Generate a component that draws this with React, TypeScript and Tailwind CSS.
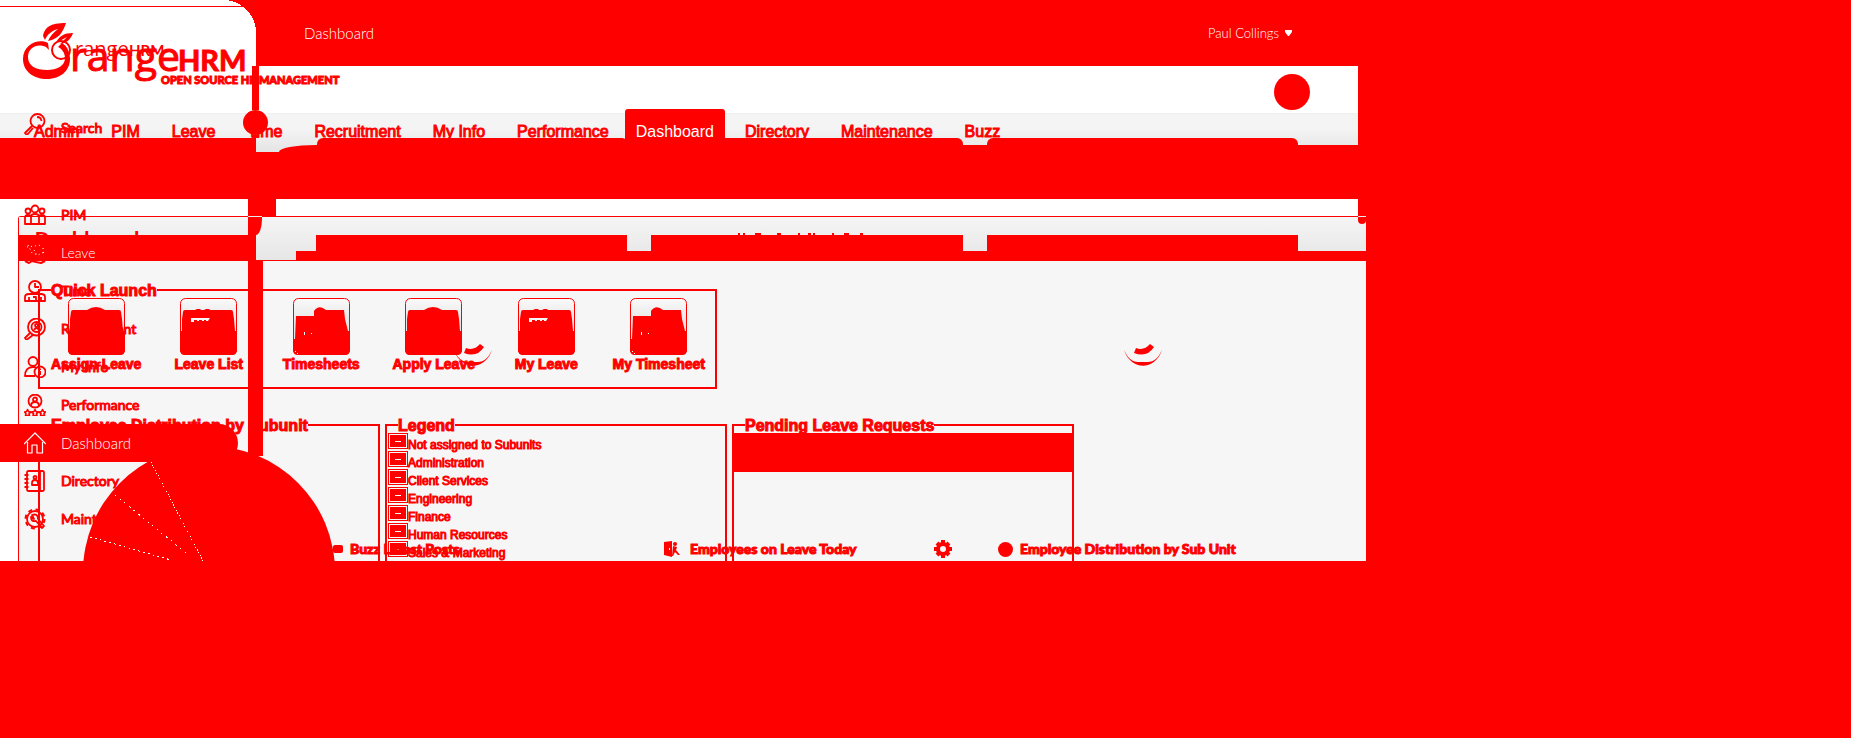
import React from "react";

const sans = "font-['Liberation_Sans',Arial,sans-serif]";

const classicMenu = ["Admin", "PIM", "Leave", "Time", "Recruitment", "My Info", "Performance", "Dashboard", "Directory", "Maintenance", "Buzz"];

const launchItems = [
  { label: "Assign Leave", kind: "person" },
  { label: "Leave List", kind: "list" },
  { label: "Timesheets", kind: "clock" },
  { label: "Apply Leave", kind: "person" },
  { label: "My Leave", kind: "list" },
  { label: "My Timesheet", kind: "clock" },
];

const legendRows = ["Not assigned to Subunits", "Administration", "Client Services", "Engineering", "Finance", "Human Resources", "Sales & Marketing"];

function Logo() {
  return (
    <svg width="360" height="70" viewBox="0 20 360 70" className="block" fill="#f00" role="img" aria-label="OrangeHRM">
      <path fillRule="evenodd" d="M48 43C40 38 23 43 23 59C23 71 33 79 47 79C61 79 70 70 70 59C70 52 67 46 62 43L58 47C62 49 65 53 65 58C65 66 57 70 47 70C36 70 28 66 28 57C28 47 38 43 46 47L49 50Z" />
      <path d="M43 36C45 27 50 23 66 23C63 32 59 39 48 41C50 36 54 32 58 29C51 31 47 35 45 40Z" />
      <path d="M56 43C59 36 64 33 73 33C71 39 67 43 60 44L67 37Z" />
      <circle cx="61" cy="50" r="9" fill="none" stroke="#f00" strokeWidth="2" />
      <g stroke="#f00" strokeWidth="1">
        <text x="70" y="71" fontFamily="Open Sans, sans-serif" fontSize="41">range</text>
        <text x="178" y="71" fontFamily="Lato, sans-serif" fontSize="29" fontWeight="700">HRM</text>
        <text x="161" y="84" fontFamily="Lato, sans-serif" fontSize="11" fontWeight="900">OPEN SOURCE HR MANAGEMENT</text>
      </g>
      <text x="75" y="56" fontFamily="Open Sans, sans-serif" fontSize="20">range</text>
      <text x="129" y="56" fontFamily="Lato, sans-serif" fontSize="15" fontWeight="700">HRM</text>
    </svg>
  );
}

function LaunchIcon({ kind }: { kind: string }) {
  return (
    <svg width="57" height="57" viewBox="0 0 57 57" className="block">
      <defs>
        <linearGradient id="tile" x1="0" y1="0" x2="0" y2="1">
          <stop offset="0" stopColor="#fafafa" />
          <stop offset="0.4" stopColor="#e6e6e6" />
        </linearGradient>
      </defs>
      <rect x="0.5" y="0.5" width="56" height="56" rx="5" fill="url(#tile)" stroke="#f00" />
      {kind === "person" && <path fill="#f00" d="M3 14q0-2 2-2H19q9-6 18 0H51q2 0 2 2l1 7l1 12h2v19q0 5-5 5H5q-5 0-5-5V33h2V21Z" />}
      {kind === "list" && <path fill="#f00" d="M3 14q0-2 2-2H15l2-1h3l1 1h3l2-1h3l1 1H51q2 0 2 2l1 7l1 12h2v19q0 5-5 5H5q-5 0-5-5V33h2V21Z" />}
      {kind === "clock" && <path fill="#f00" d="M3 18H21V13q5-7 12-1H51l1 9l3 12h2v19q0 5-5 5H5q-5 0-5-5V41h2Z" />}
      {kind === "list" && <path d="M11 20h19l-2 3H26V22H24v1H22V22H19v1H17V22H14v2H11Z" fill="#f6f6f6" />}
      {kind === "clock" && <path d="M11 34h1v3h-1zM18 35h1v1h-1zM2 53h1v1h-1zM4 55h1v1h-1z" fill="#f6f6f6" />}
    </svg>
  );
}

function Fieldset({ title, className, children }: { title: string; className: string; children?: React.ReactNode }) {
  return (
    <section className={className}>
      <h2 className="-mt-[8px] ml-[11px] h-[15px] w-fit bg-[#f6f6f6] text-[16px] leading-[15px] font-bold [-webkit-text-stroke:1px_#f00]">{title}</h2>
      {children}
    </section>
  );
}

function SubunitPie() {
  return (
    <svg width="256" height="116" viewBox="81 445 256 116" className="mt-[12px] ml-[41px] block">
      <circle cx="209" cy="572" r="126" fill="#f00" />
      <g stroke="#fff" strokeWidth="1" shapeRendering="crispEdges">
        <path d="M151 462L203 561" strokeDasharray="1 2" />
        <path d="M115 495L191 557" strokeDasharray="1 5 2 4" />
        <path d="M90 537L171 560" strokeDasharray="2 3" />
      </g>
    </svg>
  );
}

function Smile() {
  return (
    <svg width="40" height="24" viewBox="0 0 40 24" className="block" fill="#f00">
      <path d="M1 7C8 28 32 28 39 7C33 20 27 19 20 19C13 19 7 20 1 7Z" />
      <path d="M13 5Q21 8 27 1L31 4Q24 15 11 10Z" />
    </svg>
  );
}

function ClassicPage() {
  return (
    <div className={`${sans} col-start-1 row-start-1 text-[#f00]`}>
      <header className="mr-2 h-[113px] bg-white pt-[6px]">
        <div className="border-t border-[#f00] pt-[13px]">
          <Logo />
        </div>
      </header>
      <nav className="mr-2 flex h-[39px] border-t border-[#efefef] bg-linear-to-b from-[#f4f4f4] from-40% to-[#e4e4e4] pl-[18px] text-[16px] leading-[20px]">
        {classicMenu.map((m) =>
          m === "Dashboard" ? (
            <a key={m} href="#dashboard" className="-mt-[5px] rounded-t-[3px] bg-[#f00] px-[11px] pt-[13px] text-white">{m}</a>
          ) : (
            <a key={m} href="#menu" className="px-4 pt-[8px] whitespace-nowrap [-webkit-text-stroke:1px_#f00] [&:nth-child(9)]:pl-[20px]">{m}</a>
          )
        )}
      </nav>
      <div className="h-[47px] bg-[#f00]" />
      <div className="flex bg-white">
        <div className="h-[17px] flex-1" />
        <div className="w-2 bg-[#f00]" />
      </div>
      <div className="bg-white pl-[18px]">
        <main className="h-[345px] rounded-tl-[3px] border-t border-l border-[#f00] bg-[#f6f6f6]">
          <h1 className="h-[44px] border-b border-[#f00] bg-linear-to-b from-[#f5f5f5] to-[#e6e6e6] pl-[16px] pt-[10px] text-[20px] leading-[24px] font-bold">Dashboard</h1>
          <Fieldset title="Quick Launch" className="mt-[28px] ml-[19px] h-[100px] w-[679px] border-2 border-[#f00]">
            <ul className="flex w-[675px] text-[14px] leading-[18px] font-bold">
              {launchItems.map((item) => (
                <li key={item.label} className="flex flex-1 flex-col items-center whitespace-nowrap">
                  <a href="#launch" className="flex flex-col items-center">
                    <LaunchIcon kind={item.kind} />
                    <span className="[-webkit-text-stroke:1px_#f00]">{item.label}</span>
                  </a>
                </li>
              ))}
            </ul>
          </Fieldset>
          <div className="mt-[35px] ml-[19px] flex gap-[5px]">
            <Fieldset title="Employee Distribution by Subunit" className="h-[137px] w-[342px] border-2 border-b-0 border-[#f00]">
              <SubunitPie />
            </Fieldset>
            <Fieldset title="Legend" className="h-[137px] w-[342px] border-2 border-b-0 border-[#f00]">
              <ul className="ml-px text-[12px] leading-[18px]">
                {legendRows.map((row) => (
                  <li key={row} className="flex h-[18px] items-start">
                    <span className="h-[16px] w-[20px] border border-[#f00] p-px">
                      <span className="flex h-full items-center justify-center bg-[#f00]">
                        <span className="h-px w-[6px] bg-white" />
                      </span>
                    </span>
                    <span className="mt-[3px] whitespace-nowrap [-webkit-text-stroke:1px_#f00]">{row}</span>
                  </li>
                ))}
              </ul>
            </Fieldset>
            <Fieldset title="Pending Leave Requests" className="h-[137px] w-[342px] border-2 border-b-0 border-[#f00]">
              <div className="h-[39px] bg-[#f00]" />
            </Fieldset>
          </div>
        </main>
      </div>
    </div>
  );
}

function ModernFrame() {
  return (
    <div className="pointer-events-none col-start-1 row-start-1 font-['Lato',sans-serif] text-[#f00]">
      <header className="flex h-[66px]">
        <div className="ml-[223px] size-[33px] bg-[radial-gradient(circle_at_0_100%,transparent_33px,#f00_33px)]" />
        <div className="flex flex-1 items-center justify-between bg-[#f00] pb-px pl-[48px] text-white">
          <span className="text-[15px] leading-[20px] font-light">Dashboard</span>
          <button className="mr-[74px] flex items-center gap-[6px] text-[13px] leading-[20px] font-light">
            Paul Collings
            <svg width="7" height="6" viewBox="0 0 7 6" fill="#fff"><path d="M0 0H7V2L4 6H3L0 2Z" /></svg>
          </button>
        </div>
      </header>
      <div className="flex h-[72px] justify-between pl-[243px] pr-[56px]">
        <div className="flex w-[25px] flex-col">
          <div className="mx-auto h-[44px] w-[7px] bg-[#f00]" />
          <div className="size-[25px] shrink-0 rounded-full bg-[#f00]" />
          <div className="mx-auto h-[3px] w-[7px] bg-[#f00]" />
        </div>
        <div className="mt-[8px] size-[36px] rounded-full bg-[#f00]" />
      </div>
      <div className="flex h-[14px]">
        <div className="mr-[23px] w-[256px] bg-[#f00]" />
        <div className="flex flex-1 flex-col">
          <div className="mr-[68px] ml-[38px] flex h-[7px] gap-6">
            <div className="flex-1 rounded-t-[6px] bg-[#f00]" />
            <div className="flex-1 rounded-t-[6px] bg-[#f00]" />
            <div className="flex-1 rounded-t-[6px] bg-[#f00]" />
          </div>
          <div className="h-[7px] bg-[#f00] [border-top-left-radius:37px_7px]" />
        </div>
      </div>
      <div className="mt-[47px] ml-[248px] h-[17px] w-[28px] bg-[#f00]" />
      <div className="flex h-[19px] pl-[248px]">
        <div className="w-[14px] border-t border-[#e8e8e8] bg-[#f00] [border-bottom-right-radius:6px_16px]" />
        <svg width="130" height="2" viewBox="0 0 130 2" className="mr-auto ml-[476px] self-end" fill="#f00">
          <path d="M0 0h2v2h-2zM5 0h2v2h-2zM17 0h6v2h-6zM39 0h4v2h-4zM60 0h2v2h-2zM70 0h3v2h-3zM75 0h2v2h-2zM94 0h2v2h-2zM106 0h5v2h-5zM122 0h3v2h-3z" />
        </svg>
        <div className="h-[8px] w-[8px] rounded-b-[4px] border-t border-[#e8e8e8] bg-[#f00]" />
      </div>
      <div className="flex h-[26px]">
        <div className="mr-[40px] ml-[19px] w-[237px] bg-[#f00]" />
        <div className="flex flex-1 flex-col">
          <div className="mr-[68px] ml-[20px] flex h-[16px] gap-6">
            <div className="flex-1 bg-[#f00]" />
            <div className="flex-1 bg-[#f00]" />
            <div className="flex-1 bg-[#f00]" />
          </div>
          <div className="h-[10px] bg-[#f00]" />
        </div>
      </div>
      <div className="flex h-[300px] flex-col pl-[248px]">
        <div className="flex h-[195px] items-start">
          <div className="h-full w-[15px] bg-[#f00]" />
          <div className="mt-[82px] ml-[190px]"><Smile /></div>
          <div className="mt-[82px] mr-[203px] ml-auto"><Smile /></div>
        </div>
        <div className="mt-auto mb-[2px] ml-[85px] flex h-[20px] items-center text-[14px] leading-[20px] font-black whitespace-nowrap">
          <h3 className="flex w-[331px] items-center gap-[7px] [-webkit-text-stroke:1px_#f00]">
            <svg width="10" height="10" viewBox="0 0 10 10" fill="#f00"><rect y="1" width="10" height="8" rx="2" /></svg>
            Buzz Latest Posts
          </h3>
          <h3 className="flex w-[270px] items-center gap-[10px] [-webkit-text-stroke:1px_#f00]">
            <svg width="16" height="16" viewBox="0 0 16 16" fill="#f00">
              <path d="M0 1L8 0V16L0 14Z" /><circle cx="11" cy="3" r="2" /><path d="M9 5L13 6L12 9L16 14H14L11 11L9 15H8Z" /><path d="M5 7h1v2H5z" fill="#fff" />
            </svg>
            Employees on Leave Today
          </h3>
          <svg width="18" height="18" viewBox="0 0 18 18" className="mr-[46px]">
            <circle cx="9" cy="9" r="5" fill="none" stroke="#f00" strokeWidth="4" />
            <path stroke="#f00" strokeWidth="4" d="M9 0V4M9 14V18M0 9H4M14 9H18M3 3L5 5M13 13L15 15M3 15L5 13M13 5L15 3" />
          </svg>
          <h3 className="flex items-center gap-[7px] [-webkit-text-stroke:1px_#f00]">
            <span className="size-[15px] rounded-full bg-[#f00]" />
            Employee Distribution by Sub Unit
          </h3>
        </div>
      </div>
    </div>
  );
}

function SideIcon({ name }: { name: string }) {
  const stroke = name === "Dashboard" ? "#fff" : "#f00";
  return (
    <svg width="22" height="22" viewBox="0 0 22 22" fill="none" stroke={stroke} strokeWidth="1.8" strokeLinejoin="round" className="block shrink-0">
      {name === "Search" && (<><circle cx="13.5" cy="8" r="7" /><path d="M13 4q4 0 4.500 4" /><path d="M8 13L1 20L3 22L9 15" /></>)}
      {name === "PIM" && (<><circle cx="11" cy="5" r="3.500" /><circle cx="4" cy="7" r="2.500" /><circle cx="18" cy="7" r="2.500" /><path d="M7 20v-7q0-3 4-3t4 3v7ZM7 20H1v-6q0-3 3-3t3 2M15 20h6v-6q0-3-3-3t-3 2" /></>)}
      {name === "Leave" && <path stroke="#fff" strokeWidth="1" strokeDasharray="1 3" d="M4 3L8 11L14 13L20 10M3 5L18 3M10 8L14 15M19 6L20 14" />}
      {name === "Leave" && <path d="M1 19l4 2l3-2l4 1l5 1l4-2" strokeWidth="2" />}
      {name === "Time" && (<><circle cx="11" cy="7" r="6" /><path d="M11 3v4h4M1 21v-4q0-3 4-3h12q4 0 4 3v4ZM5 17v4M9 17h3v4M17 17v4" /></>)}
      {name === "Recruitment" && (<><circle cx="12.500" cy="9" r="8.500" /><circle cx="12.500" cy="9" r="5" /><circle cx="12.500" cy="7.500" r="1.500" /><path d="M10 12q2.500-4 5 0M6 15L1 20L2.500 22L9 17" /></>)}
      {name === "My Info" && (<><circle cx="9" cy="5.500" r="4.500" /><path d="M11 20H1q0-9 8-9q2 0 4 1" /><circle cx="16" cy="16" r="5.500" /><path d="M16 12.500v1.500M16 15v4" strokeWidth="2" /></>)}
      {name === "Performance" && (<><circle cx="11" cy="7" r="6.500" /><circle cx="11" cy="5.500" r="2" /><path d="M7 12q0-4 4-4t4 4" /><path strokeWidth="1.600" d="M3.500 15.500l1 2l2.500 .5l-2 1.500l.5 2h-4l.5-2l-1.500-1.500l2-.5ZM11 15.500l1 2l2.500 .5l-2 1.500l.5 2h-4l.5-2l-2-1.500l2.500-.5ZM18.500 15.500l1 2l2 .5l-1.500 1.500l.5 2h-4l.5-2l-2-1.500l2.500-.5Z" /></>)}
      {name === "Dashboard" && <path strokeWidth="1.200" d="M0 12L11 1L22 12M3.500 10v11H8V13h5v8h5.500V10" />}
      {name === "Directory" && (<><rect x="3" y="1" width="17" height="20" rx="1.500" /><path d="M16 1v20M0.500 5h4M0.500 9h4M0.500 13h4M0.500 17h4" /><circle cx="11" cy="7.500" r="1.500" /><path d="M8 15v-2q0-3 3-3t3 3v2Z" /></>)}
      {name === "Maintenance" && (<><circle cx="11" cy="11" r="8" /><circle cx="11" cy="11" r="9.500" strokeWidth="2" strokeDasharray="4 3.500" /><path d="M8 7q6-2 6 4l6 7l-2 2l-6-7q-5 1-5-4l3 2Z" /></>)}
    </svg>
  );
}

const sideItems = ["PIM", "Leave", "Time", "Recruitment", "My Info", "Performance", "Dashboard", "Directory", "Maintenance"];

function SideMenu() {
  return (
    <nav className="z-10 col-start-1 row-start-1 w-[240px] self-start pt-[109px] font-['Lato',sans-serif] text-[14px] leading-[20px] text-[#f00]">
      <a href="#search" className="mb-[58px] flex h-[29px] items-center gap-[15px] pl-[24px]">
        <SideIcon name="Search" />
        <span className="mt-[8px] [-webkit-text-stroke:1px_#f00]">Search</span>
      </a>
      <ul>
        {sideItems.map((item) => (
          <li key={item}>
            {item === "Dashboard" ? (
              <a href="#home" className="flex h-[38px] w-[238px] items-center gap-[15px] rounded-r-[19px] bg-[#f00] pl-[24px] text-white">
                <SideIcon name={item} />
                <span className="text-[15px] font-light">{item}</span>
              </a>
            ) : (
              <a href="#item" className="flex h-[38px] items-center gap-[15px] pl-[24px]">
                <SideIcon name={item} />
                {item === "Leave" ? <span className="font-light text-white">{item}</span> : <span className="[-webkit-text-stroke:1px_#f00]">{item}</span>}
              </a>
            )}
          </li>
        ))}
      </ul>
    </nav>
  );
}

export default function App() {
  return (
    <div className="grid min-h-screen grid-cols-[minmax(0,1fr)_485px] items-start bg-[#f00]">
      <div className="grid grid-cols-[minmax(0,1fr)] overflow-hidden">
        <ClassicPage />
        <ModernFrame />
        <SideMenu />
      </div>
    </div>
  );
}
